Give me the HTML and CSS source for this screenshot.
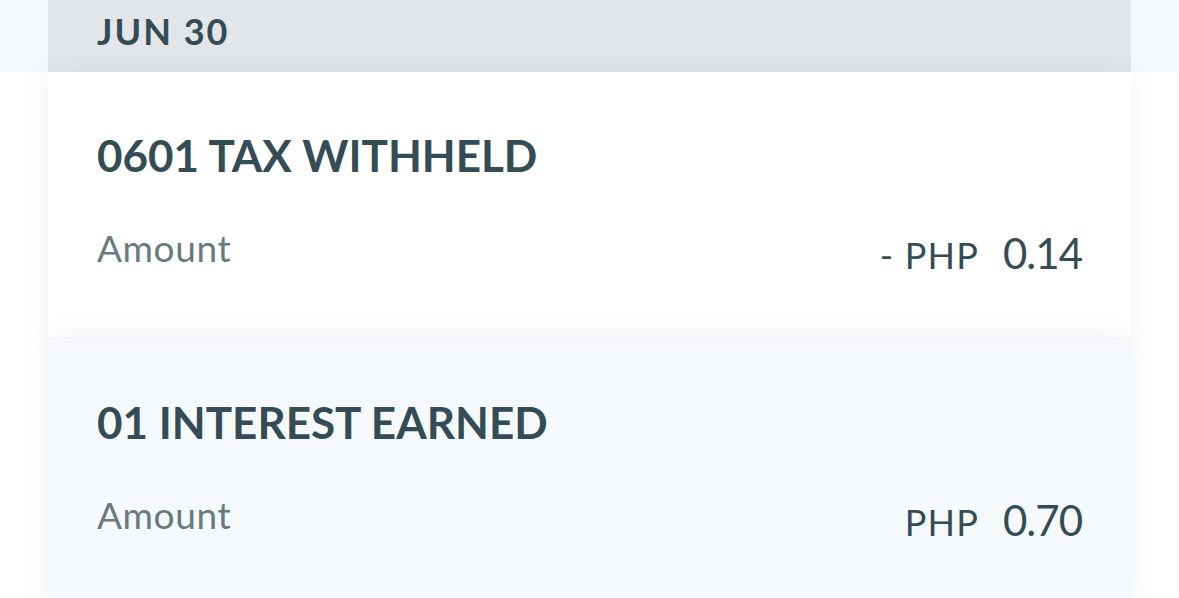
FILE: index.html
```html
<!DOCTYPE html>
<html lang="en">
<head>
    <meta charset="UTF-8">
    <meta name="viewport" content="width=device-width, initial-scale=1.0">
    <title>Transactions</title>
    <link rel="stylesheet" href="styles.css">
</head>
<body>

    <div class="franja">
        <div class="fecha">JUN 30</div>
    </div>

    <div class="lista">
        <section class="movimiento">
            <h2 class="titulo">0601 TAX WITHHELD</h2>
            <div class="fila">
                <span class="etiqueta">Amount</span>
                <span class="monto"><span class="moneda">- PHP</span><span class="valor">0.14</span></span>
            </div>
        </section>
        <section class="movimiento alterno">
            <h2 class="titulo">01 INTEREST EARNED</h2>
            <div class="fila">
                <span class="etiqueta">Amount</span>
                <span class="monto"><span class="moneda">PHP</span><span class="valor">0.70</span></span>
            </div>
        </section>
    </div>

</body>
</html>
```

FILE: styles.css
```css
@charset "utf-8";

*{    box-sizing: border-box;    margin: 0px;    padding: 0px;}
body{
    font-family: Lato, "Open Sans", sans-serif;
    color: #344c56;
    background: #fff;
    height: 598px;
    overflow: hidden;
}

.franja{
    background: #f5f9fc;
    height: 72px;
    padding: 0 48px;
}

.fecha{
    background: #e2e6e8;
    height: 72px;
    padding: 9px 49px 0;
    font-size: 36px;
    font-weight: 700;
    letter-spacing: 2px;
}

.lista{
    margin: 0 48px;
}

.movimiento{
    background: #fff;
    height: 266px;
    padding: 56px 49px 0;
    box-shadow: 0 0 28px rgba(0,0,0,.06);
}

.alterno{
    background: #f5f9fc;
    border-top: 1px solid #eef2f5;
}

.titulo{
    font-size: 44px;
    font-weight: 700;
    line-height: 54px;
}

.fila{
    display: flex;
    justify-content: space-between;
    align-items: baseline;
    margin-top: 39px;
}

.etiqueta{
    font-size: 37px;
    letter-spacing: .6px;
    color: #677a80;
}

.monto{
    display: flex;
    align-items: baseline;
    gap: 24px;
    position: relative;
    top: 7px;
}

.moneda{
    font-size: 36px;
    letter-spacing: 1.2px;
}

.valor{
    font-size: 42px;
    letter-spacing: -1px;
}
```
